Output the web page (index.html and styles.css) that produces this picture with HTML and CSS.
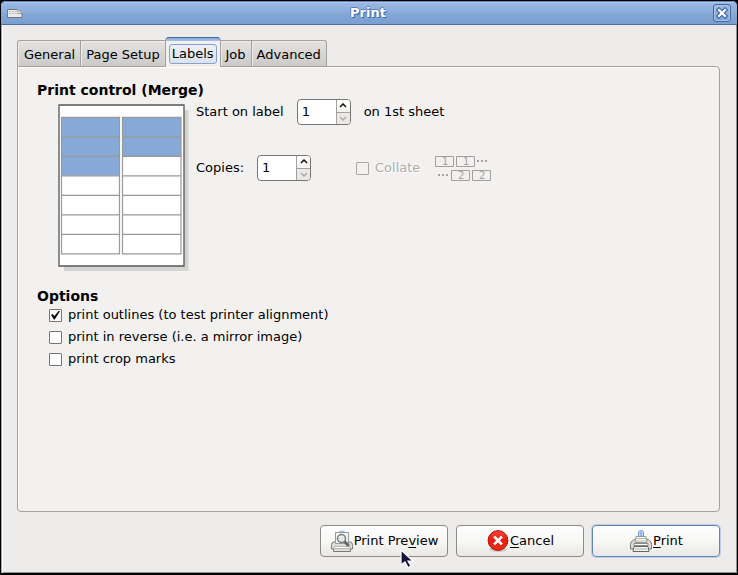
FILE: index.html
```html
<!DOCTYPE html>
<html lang="en">
<head>
<meta charset="utf-8">
<title>Print</title>
<link rel="stylesheet" href="styles.css">
</head>
<body>
<main class="window">
  <header class="titlebar">
    <svg class="app-icon" width="16" height="16" viewBox="0 0 16 16" aria-hidden="true">
      <path d="M.5 4.500H11l4 4V12.500H.5z" fill="#e9e9e9" stroke="#777"/>
      <path d="M2 6.500h8M2 8.500h9" stroke="#bbb" stroke-dasharray="2 1"/>
      <path d="M11 4.500v4h4z" fill="#fff" stroke="#999"/>
    </svg>
    <h1 class="title">Print</h1>
    <button class="close" type="button" aria-label="Close">
      <svg width="12" height="12" viewBox="0 0 12 12" aria-hidden="true">
        <path d="M3 3l6 6M9 3l-6 6" stroke="#41699f" stroke-width="4.500" stroke-linecap="square"/>
        <path d="M3 3l6 6M9 3l-6 6" stroke="#fff" stroke-width="2.200" stroke-linecap="square"/>
      </svg>
    </button>
  </header>

  <div class="content">
    <div class="tabs" role="tablist">
      <button class="tab" type="button" role="tab">General</button>
      <button class="tab" type="button" role="tab">Page Setup</button>
      <button class="tab active" type="button" role="tab" aria-selected="true"><span class="focus">Labels</span></button>
      <button class="tab" type="button" role="tab">Job</button>
      <button class="tab" type="button" role="tab">Advanced</button>
    </div>

    <section class="panel" role="tabpanel">
      <h2 class="heading">Print control (Merge)</h2>
      <div class="control">
        <svg class="sheet" width="131" height="167" viewBox="0 0 131 167" role="img" aria-label="Label sheet">
          <path d="M6 6h124.500v161H6z" fill="#d5d4d2"/>
          <path d="M1 1h125v161H1z" fill="#fff" stroke="#555" stroke-width="1.300"/>
          <g stroke="#999" stroke-width="1.200">
            <g fill="#86a9d7">
              <path d="M3.500 13.300h58v19.500h-58zM64.500 13.300h58.500v19.500H64.500zM3.500 32.800h58v19.500h-58zM64.500 32.800h58.500v19.500H64.500zM3.500 52.300h58v19.500h-58z"/>
            </g>
            <g fill="#fff">
              <path d="M64.500 52.300h58.500v19.500H64.500zM3.500 71.800h58v19.500h-58zM64.500 71.800h58.500v19.500H64.500zM3.500 91.300h58v19.500h-58zM64.500 91.300h58.500v19.500H64.500zM3.500 110.800h58v19.500h-58zM64.500 110.800h58.500v19.500H64.500zM3.500 130.300h58v19.500h-58zM64.500 130.300h58.500v19.500H64.500z"/>
            </g>
          </g>
        </svg>
        <div class="fields">
          <div class="field">
            <label for="start">Start on label</label>
            <span class="spin">
              <input id="start" type="text" inputmode="numeric" value="1">
              <span class="steps">
                <button type="button" aria-label="Increase start label"><svg width="8" height="5" viewBox="0 0 8 5"><path d="M1 4l3-3 3 3" fill="none" stroke="#111" stroke-width="1.500"/></svg></button>
                <button type="button" disabled aria-label="Decrease start label"><svg width="8" height="5" viewBox="0 0 8 5"><path d="M1 1l3 3 3-3" fill="none" stroke="#aaa" stroke-width="1.500"/></svg></button>
              </span>
            </span>
            <span>on 1st sheet</span>
          </div>
          <div class="field">
            <label for="copies">Copies:</label>
            <span class="spin">
              <input id="copies" type="text" inputmode="numeric" value="1">
              <span class="steps">
                <button type="button" aria-label="Increase copies"><svg width="8" height="5" viewBox="0 0 8 5"><path d="M1 4l3-3 3 3" fill="none" stroke="#111" stroke-width="1.500"/></svg></button>
                <button type="button" disabled aria-label="Decrease copies"><svg width="8" height="5" viewBox="0 0 8 5"><path d="M1 1l3 3 3-3" fill="none" stroke="#aaa" stroke-width="1.500"/></svg></button>
              </span>
            </span>
            <span class="collate">
              <label class="check disabled"><input type="checkbox" disabled>Collate</label>
              <svg class="order" width="58" height="26" viewBox="0 0 58 26" aria-hidden="true">
                <path d="M1.500 1.500h18v10h-18zM22.500 1.500h18v10h-18zM17.500 15.500h18v10h-18zM38.500 15.500h18v10h-18z" fill="none" stroke="#a3a19f"/>
                <path d="M43 6h2M47 6h2M51 6h2M4 20h2M8 20h2M12 20h2" stroke="#a3a19f" stroke-width="2"/>
                <g class="order-text"><text x="8" y="10">1</text><text x="29" y="10">1</text><text x="24" y="24">2</text><text x="45" y="24">2</text></g>
              </svg>
            </span>
          </div>
        </div>
      </div>

      <h2 class="heading">Options</h2>
      <div class="options">
        <label class="check"><input type="checkbox" checked>print outlines (to test printer alignment)</label>
        <label class="check"><input type="checkbox">print in reverse (i.e. a mirror image)</label>
        <label class="check"><input type="checkbox">print crop marks</label>
      </div>
    </section>

    <footer class="actions">
      <button class="action" type="button">
        <svg width="24" height="24" viewBox="0 0 24 24" aria-hidden="true">
          <path d="M8 4q4-4 8 0" fill="#b9d3f5" stroke="#8db4e8"/>
          <path d="M3 13h18q2 1 1.500 7h-2v2.500h-17V20h-2Q1 14 3 13z" fill="#ddddda" stroke="#777a76"/>
          <path d="M5.500 3.500h13v11h-13z" fill="#f5f5f3" stroke="#999b97"/>
          <path d="M4 17.500h16v2H4z" fill="#fff" stroke="#b5b6b2"/>
          <path d="M4 22.500h16" stroke="#777a76"/>
          <path d="M14 12l4 4" stroke="#666" stroke-width="3" stroke-linecap="round"/>
          <circle cx="11.500" cy="9.500" r="4" fill="#e5e9ec" stroke="#7b7e7b" stroke-width="1.500"/>
          <path d="M9.500 9q1-2 3-1.500" fill="none" stroke="#fff"/>
        </svg>
        <span>Print Pre<u>v</u>iew</span>
        <svg class="pointer" width="16" height="20" viewBox="0 0 16 20" aria-hidden="true">
          <path d="M1 1v15l4-3 3 5.500 3-1.500-3-5h5z" fill="#15153a" stroke="#fff" stroke-width="1.200"/>
        </svg>
      </button>
      <button class="action" type="button">
        <svg width="24" height="24" viewBox="0 0 24 24" aria-hidden="true">
          <defs><linearGradient id="red" x2="0" y2="1"><stop stop-color="#f7483e"/><stop offset=".5" stop-color="#e61b12"/><stop offset="1" stop-color="#e9301c"/></linearGradient></defs>
          <ellipse cx="12" cy="20.500" rx="9" ry="2.500" fill="#aaa" opacity=".5"/>
          <circle cx="12" cy="11.500" r="9.900" fill="url(#red)" stroke="#b50f0b"/>
          <path d="M9 8.500l6 6M15 8.500l-6 6" stroke="#fff" stroke-width="2.600" stroke-linecap="square"/>
        </svg>
        <span><u>C</u>ancel</span>
      </button>
      <button class="action default" type="button">
        <svg width="24" height="24" viewBox="0 0 24 24" aria-hidden="true">
          <path d="M9.500 8V4q0-2.500 2.500-2.500T14.500 4v4z" fill="#c4daf7" stroke="#709bd5"/>
          <path d="M12 3v5" stroke="#5f8fce"/>
          <path d="M4 11.500q0-1 2-1h12q2 0 2.500 1 2 1 2 4V20h-21v-4.500q0-3 2.500-4z" fill="#deded9" stroke="#777a74"/>
          <path d="M7 7.500h10l1 6H6z" fill="#f8f8f5" stroke="#999b95"/>
          <path d="M7 9.500h10M6 12h12" stroke="#b4b6b1"/>
          <path d="M5 14.500h14v2H5z" fill="#fff" stroke="#8b8d88"/>
          <path d="M5 17.500h14l1 5H4z" fill="#f4f4f0" stroke="#666963"/>
          <path d="M6 20h12" stroke="#aaaba6"/>
          <path d="M20 15h1" stroke="#e7dc72" stroke-width="2"/>
        </svg>
        <span><u>P</u>rint</span>
      </button>
    </footer>
  </div>
</main>
</body>
</html>
```
FILE: styles.css
```css
* { box-sizing: border-box; }
body {
  margin: 0;
  background: #000;
  color: #000;
  font: 13px/16px "DejaVu Sans", sans-serif;
}
button, input { font: inherit; color: inherit; margin: 0; padding: 0; }
svg { display: block; flex: none; }
h1, h2 { margin: 0; font: inherit; font-weight: bold; }

.window {
  display: flex;
  flex-direction: column;
  min-height: 100vh;
  border: 1px solid #000;
  border-bottom-width: 2px;
  border-radius: 6px 6px 0 0;
  background: #edeceb;
  box-shadow: inset 1px 0 #a5a4a2, inset 2px 0 #fff, inset -1px -1px #92918f;
}
.titlebar {
  display: flex;
  align-items: center;
  height: 24px;
  padding: 0 6px;
  border-bottom: 1px solid #4b6fa5;
  border-radius: 5px 5px 0 0;
  background: linear-gradient(#9bb9e4, #8badda 50%, #83a8d6 55%, #7a9ed0);
  box-shadow: inset 0 1px #6284b8, inset 0 2px #adc7ed;
}
.title {
  flex: 1;
  text-align: center;
  color: #fff;
  text-shadow: 1px 1px #41699f, -1px 0 #5b82b8, 0 -1px #5b82b8;
}
.close {
  display: grid;
  place-items: center;
  width: 18px;
  height: 18px;
  border: 1px solid #41699f;
  border-radius: 3px;
  background: linear-gradient(#9dbbe6, #7da2d3);
  box-shadow: inset 0 0 0 1px #a7c3eb;
}
.content {
  display: flex;
  flex: 1;
  flex-direction: column;
  padding: 12px 17px 16px 16px;
}

.tabs { display: flex; align-items: flex-end; }
.tab {
  height: 26px;
  padding: 2px 5px 0;
  border: 1px solid #a2a19f;
  border-width: 1px 0 0 1px;
  background: linear-gradient(#e4e3e1, #cbcac8);
  box-shadow: inset 1px 1px #eeedec;
}
.tab:first-child { padding-left: 6px; border-top-left-radius: 3px; }
.tab:last-child { border-right-width: 1px; border-top-right-radius: 3px; }
.tab.active {
  position: relative;
  height: 30px;
  margin-bottom: -1px;
  padding: 0 3px 0 3px;
  border: 1px solid #a2a19f;
  border-top: 1px solid #41699f;
  border-bottom: 0;
  border-radius: 4px 4px 0 0;
  background: linear-gradient(#8badda, #a5c2ea 3px, #f2f1f0 3px);
  box-shadow: none;
}
.tab.active + .tab { border-left: 0; }
.focus {
  display: block;
  height: 20px;
  margin-top: 2px;
  padding: 0 2px;
  border: 1px solid #86a2cc;
  border-radius: 3px;
  background: linear-gradient(#eef1f6, #dce2eb);
  line-height: 18px;
}
.panel {
  flex: 1;
  padding: 15px 19px;
  border: 1px solid #a2a19f;
  border-radius: 0 4px 4px 4px;
  background: #f2f1f0;
  box-shadow: inset 1px 1px #fff;
}
.heading { font-size: 14px; }
.control { display: flex; gap: 7px; padding: 1px 0 17px 21px; }
.sheet { margin-top: 5px; }
.fields { display: flex; flex-direction: column; gap: 30px; }
.field { display: flex; align-items: center; gap: 13px; height: 26px; }
.spin {
  display: flex;
  width: 54px;
  height: 26px;
  border: 1px solid #777572;
  border-radius: 4px;
  background: #fff;
  overflow: hidden;
}
.spin input {
  flex: 1;
  min-width: 0;
  padding-left: 4px;
  border: 0;
  outline: 0;
  background: none;
}
.steps {
  display: flex;
  flex-direction: column;
  width: 14px;
  border-left: 1px solid #a2a19f;
}
.steps button {
  display: grid;
  place-items: center;
  flex: 1;
  border: 0;
  background: linear-gradient(#fff, #f3f2f1);
}
.steps button + button { border-top: 1px solid #a2a19f; background: #eae9e8; }

.check { display: flex; align-items: center; gap: 6px; height: 22px; }
.check input {
  appearance: none;
  display: grid;
  place-items: center;
  width: 13px;
  height: 13px;
  border: 1px solid #777572;
  border-radius: 1px;
  background: #fff;
}
.check input:checked::before {
  content: "";
  width: 9px;
  height: 9px;
  background: #111;
  clip-path: polygon(0 50%, 18% 38%, 38% 62%, 88% 0, 100% 8%, 42% 100%, 32% 100%);
}
.disabled { color: #b0aeab; text-shadow: 1px 1px #fff; }
.disabled input { border-color: #aaa8a6; background: #f2f1f0; }
.collate { display: flex; align-items: center; gap: 14px; margin-left: 32px; }
.order-text { fill: #a3a19f; font-size: 10px; }
.options { padding-left: 12px; }

.actions {
  display: flex;
  justify-content: flex-end;
  gap: 8px;
  margin-top: 13px;
}
.action {
  position: relative;
  display: flex;
  align-items: center;
  justify-content: center;
  width: 128px;
  height: 32px;
  border: 1px solid #8e8c89;
  border-radius: 4px;
  background: linear-gradient(#fff, #f7f7f6 50%, #e9e8e7);
}
.default { border-color: #6284b8; box-shadow: 0 0 0 1px #bccde6; }
.action u { text-underline-offset: 2px; }
.pointer { position: absolute; left: 79px; top: 23px; }
```
